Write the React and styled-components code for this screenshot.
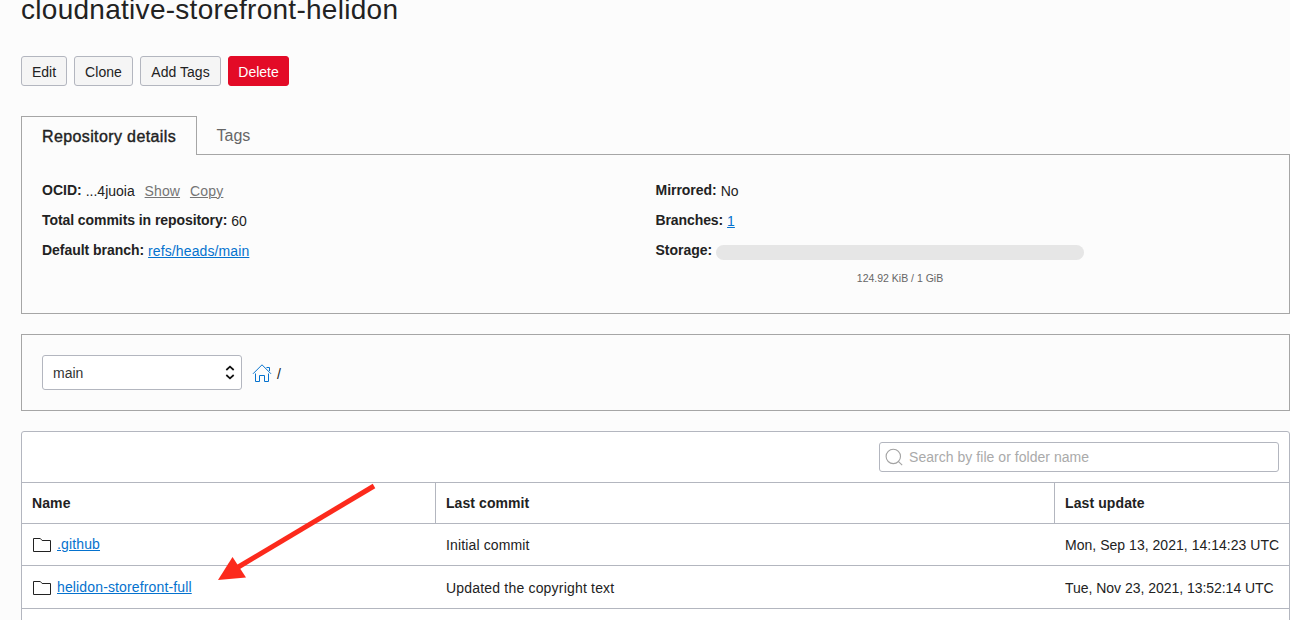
import React from "react";
import styled, { createGlobalStyle } from "styled-components";

const GlobalStyle = createGlobalStyle`
  * { box-sizing: border-box; }
  body {
    margin: 0;
    background: #fcfcfc;
    color: #222;
    font: 14px/20px "Liberation Sans", Arial, sans-serif;
    overflow: hidden;
  }
`;

const Page = styled.div`
  position: relative;
  width: 1290px;
  height: 620px;
  padding-left: 21px;
  overflow: hidden;
`;

const Title = styled.h1`
  margin: -10px 0 0;
  height: 66px;
  font-size: 28px;
  font-weight: 400;
  line-height: 40px;
  letter-spacing: 0.28px;
`;

const Toolbar = styled.div`
  display: flex;
  gap: 7px;
  height: 60px;
`;

const Button = styled.button`
  width: ${(p) => p.$width}px;
  height: 30px;
  padding: 2px 0 0;
  border: 1px solid ${(p) => (p.$danger ? "#e30b27" : "#b3b6bf")};
  border-radius: 3px;
  background: ${(p) => (p.$danger ? "#e30b27" : "#f5f5f5")};
  color: ${(p) => (p.$danger ? "#fff" : "#222")};
  font: inherit;
  letter-spacing: ${(p) => p.$tracking || 0}px;
`;

const TabBar = styled.div`
  display: flex;
  height: 39px;
`;

const Tab = styled.div`
  padding: 1px 0 0 19.5px;
  font-size: 16px;
  line-height: 38px;
  color: #666;
  flex: 1;
  border-bottom: 1px solid #a6a6a6;
`;

const ActiveTab = styled(Tab)`
  flex: 0 0 176px;
  padding-left: 20px;
  color: #222;
  letter-spacing: 0.38px;
  -webkit-text-stroke: 0.4px #222;
  border: 1px solid #a6a6a6;
  border-bottom: 0;
`;

const Panel = styled.section`
  border: 1px solid #a6a6a6;
`;

const DetailsPanel = styled(Panel)`
  display: grid;
  grid-template-columns: 613.5px 1fr;
  height: 159px;
  padding: 21px 20px 0;
  border-top: 0;
`;

const InfoRow = styled.div`
  display: flex;
  align-items: center;
  height: 30px;
  white-space: pre;
`;

const Label = styled.strong`
  padding-bottom: 2px;
  margin-right: 4px;
  letter-spacing: ${(p) => p.$tracking || 0}px;
`;

const Link = styled.a`
  color: ${(p) => (p.$muted ? "#757575" : "#0572ce")};
  margin-left: ${(p) => (p.$muted ? 9.9 : 0)}px;
  letter-spacing: ${(p) => p.$tracking || 0}px;
  text-decoration: underline;
  text-decoration-thickness: 1px;
  text-underline-offset: 1px;
`;

const StorageBar = styled.div`
  width: 368px;
  height: 15px;
  margin-top: 3px;
  border-radius: 8px;
  background: #e6e6e6;
`;

const StorageText = styled.div`
  width: 368px;
  margin-left: 60.5px;
  padding-top: 2px;
  color: #666;
  font-size: 10.5px;
  text-align: center;
`;

const BranchPanel = styled(Panel)`
  display: flex;
  align-items: center;
  height: 77px;
  margin: 20px 0;
  padding: 0 20px;
`;

const BranchSelect = styled.div`
  display: flex;
  align-items: center;
  justify-content: space-between;
  width: 200px;
  height: 35px;
  padding: 0 6px 0 10px;
  margin-right: 10px;
  border: 1px solid #b3b6bf;
  border-radius: 3px;
  background: #fff;
  color: #333;
`;

const Slash = styled.span`
  margin: 2px 0 0 5px;
`;

const FileTable = styled.section`
  height: 200px;
  border: 1px solid #b3b6bf;
  border-radius: 3px 3px 0 0;
  background: #fff;
`;

const SearchBar = styled.div`
  display: flex;
  justify-content: flex-end;
  height: 50px;
  padding: 10px 10px 0 0;
`;

const SearchBox = styled.div`
  display: flex;
  align-items: center;
  gap: 5px;
  width: 400px;
  height: 30px;
  padding-left: 5px;
  border: 1px solid #b3b6bf;
  border-radius: 3px;
  color: #aaa;
  letter-spacing: 0.04px;
`;

const Row = styled.div`
  display: grid;
  grid-template-columns: 413px 619px 1fr;
  height: ${(p) => p.$height}px;
  border-top: 1px solid #b3b6bf;
`;

const HeadCell = styled.div`
  display: flex;
  align-items: center;
  padding-left: 10px;
  font-weight: 700;
  letter-spacing: ${(p) => p.$tracking || 0}px;

  & + & { border-left: 1px solid #b3b6bf; }
`;

const Cell = styled.div`
  display: flex;
  align-items: center;
  padding: 1px 0 0 11px;
  white-space: nowrap;
  letter-spacing: ${(p) => p.$tracking || 0}px;

  svg { margin-right: 6px; }
  a { padding-bottom: 2px; }
`;

const Arrow = styled.svg`
  position: absolute;
  left: 210px;
  top: 475px;
`;

const FolderIcon = () => (
  <svg width="18" height="14" viewBox="0 0 18 14" fill="none" stroke="#222">
    <path d="M.5 13.5V.5h6.800l1.800 2h8.400v11z" />
  </svg>
);

const HomeIcon = () => (
  <svg width="20" height="19" viewBox="0 0 20 19" fill="none" stroke="#0572ce">
    <path d="M1 10.800 10 1.800l9 9M14.500 4.500h3V8M3.500 10.500v8h4v-6h5v6h4v-8" />
  </svg>
);

const SelectIcon = () => (
  <svg width="10" height="15" viewBox="0 0 10 15" fill="none" stroke="#111" strokeWidth="1.7">
    <path d="M1.300 5 5 1.600 8.700 5M1.300 10 5 13.400 8.700 10" />
  </svg>
);

const SearchIcon = () => (
  <svg width="19" height="20" viewBox="0 0 19 20" fill="none" stroke="#a3a3a3" strokeWidth="1.1">
    <circle cx="8.300" cy="9.400" r="7.200" />
    <path d="m13.300 14.400 3.900 3.700" />
  </svg>
);

const FILES = [
  { name: ".github", commit: "Initial commit", date: "Mon, Sep 13, 2021, 14:14:23 UTC", height: 42, tracking: 0.14, commitTracking: 0.14, dateTracking: 0.03 },
  { name: "helidon-storefront-full", commit: "Updated the copyright text", date: "Tue, Nov 23, 2021, 13:52:14 UTC", height: 43, tracking: 0.14, commitTracking: 0.19, dateTracking: -0.03 },
];

export default function App() {
  return (
    <Page>
      <GlobalStyle />
      <Title>cloudnative-storefront-helidon</Title>
      <Toolbar>
        <Button $width={46}>Edit</Button>
        <Button $width={59} $tracking={0.08}>Clone</Button>
        <Button $width={81} $tracking={0.04}>Add Tags</Button>
        <Button $width={61} $danger>Delete</Button>
      </Toolbar>
      <TabBar>
        <ActiveTab>Repository details</ActiveTab>
        <Tab>Tags</Tab>
      </TabBar>
      <DetailsPanel>
        <div>
          <InfoRow>
            <Label>OCID:</Label>...4juoia<Link $muted $tracking={0.1}>Show</Link><Link $muted $tracking={0.2}>Copy</Link>
          </InfoRow>
          <InfoRow><Label $tracking={-0.07}>Total commits in repository:</Label>60</InfoRow>
          <InfoRow><Label $tracking={-0.04}>Default branch:</Label><Link $tracking={0.11}>refs/heads/main</Link></InfoRow>
        </div>
        <div>
          <InfoRow><Label $tracking={-0.03}>Mirrored:</Label>No</InfoRow>
          <InfoRow><Label $tracking={-0.1}>Branches:</Label><Link>1</Link></InfoRow>
          <InfoRow><Label>Storage:</Label><StorageBar /></InfoRow>
          <StorageText>124.92 KiB / 1 GiB</StorageText>
        </div>
      </DetailsPanel>
      <BranchPanel>
        <BranchSelect>main<SelectIcon /></BranchSelect>
        <HomeIcon />
        <Slash>/</Slash>
      </BranchPanel>
      <FileTable>
        <SearchBar>
          <SearchBox><SearchIcon />Search by file or folder name</SearchBox>
        </SearchBar>
        <Row $height={41}>
          <HeadCell $tracking={0.1}>Name</HeadCell>
          <HeadCell $tracking={0.07}>Last commit</HeadCell>
          <HeadCell $tracking={0.1}>Last update</HeadCell>
        </Row>
        {FILES.map((f) => (
          <Row key={f.name} $height={f.height}>
            <Cell><FolderIcon /><Link $tracking={f.tracking}>{f.name}</Link></Cell>
            <Cell $tracking={f.commitTracking}>{f.commit}</Cell>
            <Cell $tracking={f.dateTracking}>{f.date}</Cell>
          </Row>
        ))}
        <Row $height={30} />
      </FileTable>
      <Arrow width="170" height="110" viewBox="0 0 170 110">
        <path d="M164 11 25 94" stroke="#fc2a1c" strokeWidth="5" />
        <path d="M8 105 22.5 82 36 102.500z" fill="#fc2a1c" />
      </Arrow>
    </Page>
  );
}
